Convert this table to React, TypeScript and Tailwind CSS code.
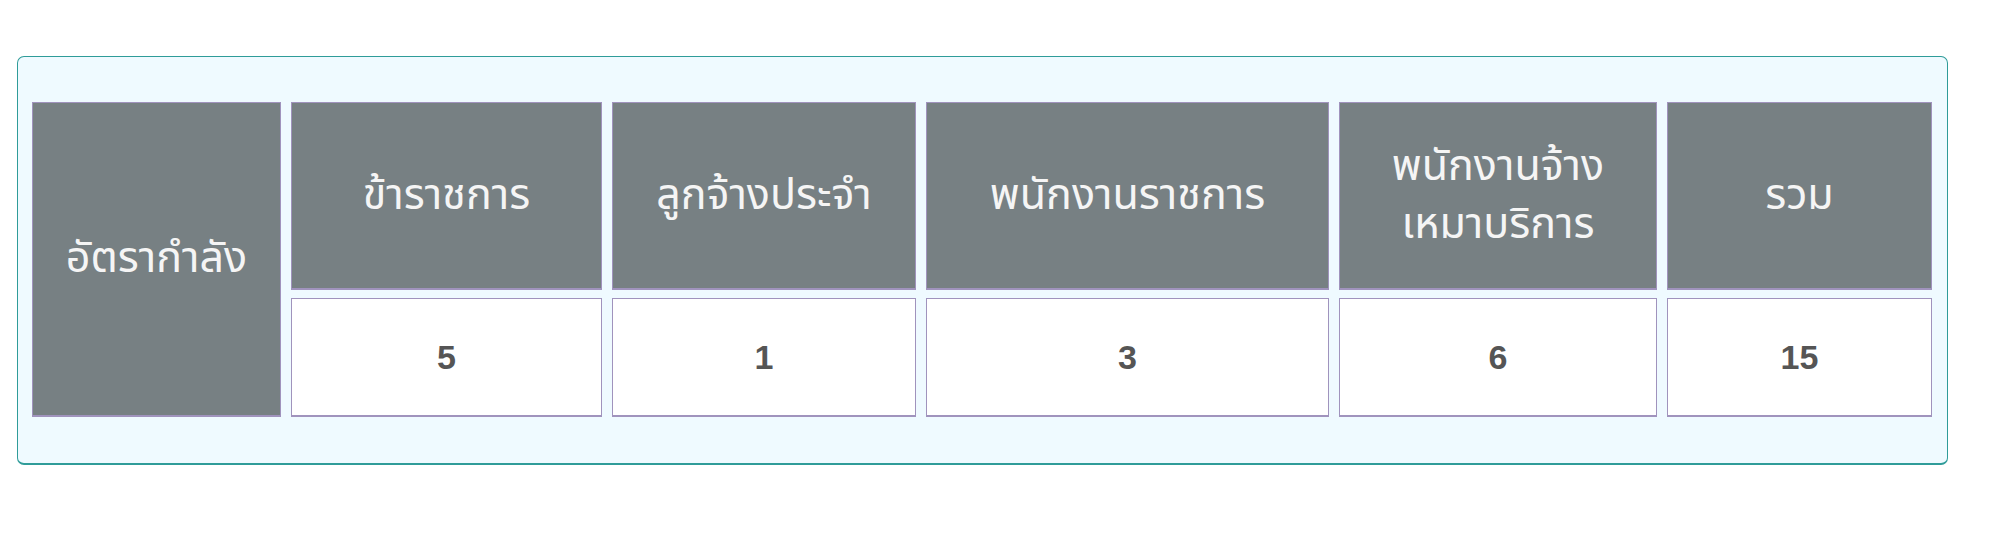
import React from "react";

const heads: { label: React.ReactNode; value: string }[] = [
  { label: "ข้าราชการ", value: "5" },
  { label: "ลูกจ้างประจำ", value: "1" },
  { label: "พนักงานราชการ", value: "3" },
  {
    label: (
      <>
        พนักงานจ้าง
        <br />
        เหมาบริการ
      </>
    ),
    value: "6",
  },
  { label: "รวม", value: "15" },
];

export default function App() {
  return (
    <div className="w-[2000px] h-[536px] bg-white pt-[56px] pl-[17px]">
      <div className="w-[1931px] h-[409px] rounded-[7px] border border-b-2 border-[#2f9c99] bg-[#effaff] pt-[45px] pl-[14px]">
        <div
          className="grid grid-cols-[249px_311px_304px_403px_318px_265px] grid-rows-[188px_119px] gap-x-[10px] gap-y-[8px] text-center"
          style={{ fontFamily: '"Noto Sans Thai", "Noto Sans", "Liberation Sans", sans-serif' }}
        >
          <div className="row-span-2 flex items-center justify-center bg-[#778083] border border-[#a093bd] border-b-2 text-[43px] leading-[58px] text-[#f5f5f5]">
            อัตรากำลัง
          </div>
          {heads.map((h, i) => (
            <div
              key={"h" + i}
              className="flex items-center justify-center bg-[#778083] border border-[#a093bd] border-b-2 text-[43px] leading-[58px] text-[#f5f5f5]"
            >
              <span>{h.label}</span>
            </div>
          ))}
          {heads.map((h, i) => (
            <div
              key={"v" + i}
              className="flex items-center justify-center bg-white border border-[#a093bd] border-b-2 text-[34px] font-bold text-[#555555]"
              style={{ fontFamily: '"Liberation Sans", Arial, sans-serif' }}
            >
              {h.value}
            </div>
          ))}
        </div>
      </div>
    </div>
  );
}
